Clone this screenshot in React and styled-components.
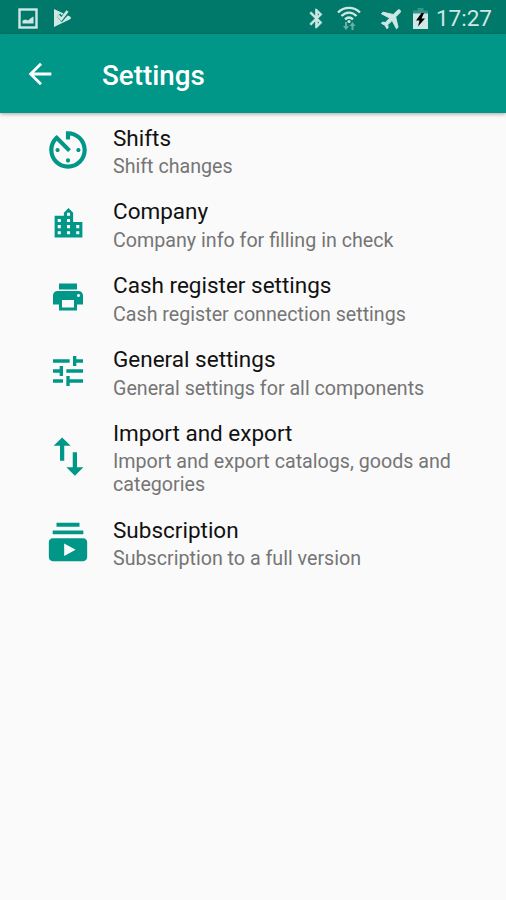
import React from "react";
import styled, { createGlobalStyle } from "styled-components";
import {
  MdArrowBack,
  MdAvTimer,
  MdBluetooth,
  MdFlight,
  MdLocationCity,
  MdPrint,
  MdSubscriptions,
  MdSwapVert,
  MdTune,
} from "react-icons/md";

const items = [
  { title: "Shifts", text: "Shift changes", Icon: MdAvTimer, size: 50 },
  {
    title: "Company",
    text: "Company info for filling in check",
    Icon: MdLocationCity,
    size: 37,
  },
  {
    title: "Cash register settings",
    text: "Cash register connection settings",
    Icon: MdPrint,
    size: 36,
  },
  {
    title: "General settings",
    text: "General settings for all components",
    Icon: MdTune,
    size: 40,
  },
  {
    title: "Import and export",
    text: "Import and export catalogs, goods and categories",
    Icon: MdSwapVert,
    size: 51,
  },
  {
    title: "Subscription",
    text: "Subscription to a full version",
    Icon: MdSubscriptions,
    size: 46,
  },
];

function PictureIcon() {
  return (
    <svg width="20" height="21" viewBox="0 0 20 21">
      <rect x="1.5" y="1.5" width="17" height="18" fill="none" stroke="currentColor" strokeWidth="2.4" />
      <path d="M4.5 15.5v-3l3-1 2.5 1 3-2.5 2.5-1.5v7z" fill="currentColor" />
    </svg>
  );
}

function PlayCheckIcon() {
  return (
    <svg width="19" height="20" viewBox="0 0 19 20">
      <path d="M1 1l15.5 7.2c2 1 2 2.4 0 3.4L1 19z" fill="currentColor" />
      <path d="M5.5 7l3.3 3.8L16 2.5" fill="none" stroke="#00796b" strokeWidth="4.4" />
      <path d="M5 7.500l3.300 3.700L14.500 3" fill="none" stroke="currentColor" strokeWidth="2.700" />
    </svg>
  );
}

function WifiIcon() {
  return (
    <svg width="24" height="25" viewBox="0 0 24 25">
      <g fill="none" stroke="currentColor" strokeWidth="2.3">
        <path d="M1 6.5C7 .3 17 .3 23 6.5" />
        <path d="M4.5 10C9 5.4 15 5.4 19.5 10" />
        <path d="M8 13.4c2.5-2.4 5.5-2.4 8 0" />
      </g>
      <circle cx="12" cy="15.5" r="1.6" fill="currentColor" />
      <g fill="currentColor" opacity="0.5">
        <path d="M8 16h2v4h2l-3 4-3-4h2z" />
        <path d="M14.5 24h2v-4h2l-3-4-3 4h2z" />
      </g>
    </svg>
  );
}

function BatteryIcon() {
  return (
    <svg width="15" height="21" viewBox="0 0 15 21">
      <path d="M4.5 0h6v2.5H15V6H0V2.5h4.500z" fill="currentColor" opacity="0.25" />
      <path d="M0 5.5h15V21H0z" fill="currentColor" />
      <path d="M8.5 5L3 12.5h3.500L5 18.500l7-8H8.500L11 5z" fill="#000" />
    </svg>
  );
}

function App() {
  return (
    <>
      <GlobalStyle />
      <Screen>
        <StatusBar>
          <Notifications>
            <PictureIcon />
            <PlayCheckIcon />
          </Notifications>
          <SystemIcons>
            <Bluetooth size={23} />
            <WifiIcon />
            <Plane size={27} />
            <BatteryIcon />
            <Clock>17:27</Clock>
          </SystemIcons>
        </StatusBar>
        <AppBar>
          <BackButton aria-label="Back">
            <MdArrowBack size={34} />
          </BackButton>
          <h1>Settings</h1>
        </AppBar>
        <List>
          {items.map(({ title, text, Icon, size }) => (
            <Item key={title}>
              <IconBox>
                <Icon size={size} />
              </IconBox>
              <ItemText>
                <h2>{title}</h2>
                <p>{text}</p>
              </ItemText>
            </Item>
          ))}
        </List>
      </Screen>
    </>
  );
}

const GlobalStyle = createGlobalStyle`
  * {
    margin: 0;
    padding: 0;
    box-sizing: border-box;
  }

  body {
    background: #fafafa;
    font-family: Roboto, sans-serif;
  }

  svg {
    display: block;
    flex-shrink: 0;
  }
`;

const Screen = styled.div`
  display: flex;
  flex-direction: column;
  width: 506px;
  height: 900px;
  background: #fafafa;
  overflow: hidden;
`;

const StatusBar = styled.div`
  display: flex;
  align-items: center;
  justify-content: space-between;
  height: 34px;
  padding: 2px 14px 0 18px;
  background: #00796b;
  color: #cfe8e4;
`;

const Notifications = styled.div`
  display: flex;
  align-items: center;
  gap: 15px;
`;

const SystemIcons = styled.div`
  display: flex;
  align-items: center;

  svg + svg {
    margin-left: 7px;
  }
`;

const Bluetooth = styled(MdBluetooth)`
  margin-right: 2px;
  stroke-width: 0.7px;

  path[fill="none"] {
    stroke: none;
  }
`;

const Plane = styled(MdFlight)`
  stroke-width: 0.8px;
  transform: rotate(45deg);

  && {
    margin-left: 18px;
  }

  path[fill="none"] {
    stroke: none;
  }
`;

const Clock = styled.span`
  margin-left: 8px;
  font-size: 22.5px;
  line-height: 26px;
`;

const AppBar = styled.header`
  display: flex;
  align-items: center;
  height: 79px;
  flex-shrink: 0;
  padding-left: 23px;
  background: #009688;
  color: #fff;
  box-shadow: 0 1px 4px rgba(0, 0, 0, 0.35);

  h1 {
    margin: 4px 0 0 45px;
    font-size: 27.8px;
    font-weight: 500;
    line-height: 32px;
  }
`;

const BackButton = styled.button`
  border: none;
  background: none;
  color: inherit;
`;

const List = styled.ul`
  list-style: none;
`;

const Item = styled.li`
  display: flex;
  align-items: center;
  padding: 7.7px 40px 7.7px 42px;
`;

const IconBox = styled.div`
  display: flex;
  align-items: center;
  justify-content: center;
  flex-shrink: 0;
  width: 52px;
  height: 51px;
  color: #009688;
`;

const ItemText = styled.div`
  margin-left: 19px;
  padding-top: 3px;

  h2 {
    margin-bottom: 4.5px;
    font-size: 22.5px;
    font-weight: 400;
    line-height: 28px;
    color: #111;
  }

  p {
    font-size: 19.66px;
    line-height: 22.9px;
    color: #757575;
  }
`;

export default App;
